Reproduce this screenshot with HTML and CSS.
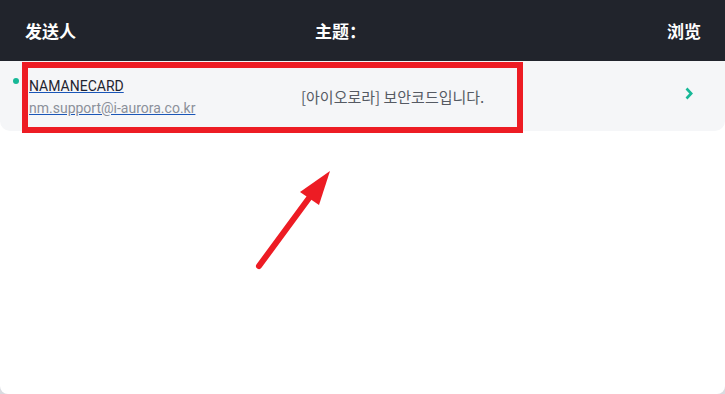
FILE: index.html
```html
<!DOCTYPE html>
<html lang="zh">
<head>
<meta charset="utf-8">
<link rel="stylesheet" href="styles.css">
</head>
<body>
<div class="card">
  <div class="head">
    <div class="h-sender">发送人</div>
    <div class="h-subject">主题：</div>
    <div class="h-view">浏览</div>
  </div>
  <div class="row">
    <span class="dot"></span>
    <div class="sender">
      <a class="name" href="#">NAMANECARD</a>
      <a class="mail" href="#">nm.support@i-aurora.co.kr</a>
    </div>
    <div class="subject">[아이오로라] 보안코드입니다.</div>
    <svg class="chev" width="8" height="13" viewBox="0 0 8 13"><path d="M1.5 1.5 L6.2 6.5 L1.5 11.5" fill="none" stroke="#17b897" stroke-width="2.6"/></svg>
  </div>
  <div class="mark"></div>
  <svg class="arrow" width="725" height="394" viewBox="0 0 725 394">
    <line x1="259" y1="266" x2="312" y2="194" stroke="#ed1c24" stroke-width="6" stroke-linecap="round"/>
    <polygon points="330,171 300,192 319,205" fill="#ed1c24"/>
  </svg>
</div>
</body>
</html>
```
FILE: styles.css
```css
html, body {
  margin: 0;
  padding: 0;
}
body {
  background: #d9dbe0;
  font-family: Roboto, "Noto Sans", "Noto Sans CJK KR", sans-serif;
}
.card {
  position: relative;
  width: 725px;
  height: 394px;
  background: #ffffff;
  border-radius: 0 0 8px 8px;
  overflow: hidden;
}
.head {
  height: 61px;
  background: #21242c;
  display: flex;
  align-items: center;
  padding: 0 24px 0 25px;
  color: #ffffff;
  font-family: "Noto Sans CJK SC", "Noto Sans CJK KR", sans-serif;
  font-weight: 700;
  font-size: 17px;
}
.h-sender {
  width: 290px;
}
.h-subject {
  flex: 1;
}
.h-view {
  text-align: right;
}
.row {
  height: 70px;
  background: #f5f6f8;
  border-radius: 0 0 10px 10px;
  display: flex;
  align-items: center;
  padding: 0 32px 0 13px;
}
.dot {
  width: 6px;
  height: 6px;
  border-radius: 50%;
  background: #17b897;
  align-self: flex-start;
  margin-top: 17px;
  margin-right: 10px;
}
.sender {
  width: 272px;
  display: flex;
  flex-direction: column;
  gap: 6px;
  margin-top: 2px;
}
.name {
  color: #1f2430;
  font-size: 14px;
  text-decoration: underline;
  text-decoration-color: #1a56b8;
}
.mail {
  color: #8b909a;
  font-size: 14px;
  text-decoration: underline;
  text-decoration-color: #1a56b8;
}
.subject {
  flex: 1;
  color: #555a63;
  font-size: 15px;
  font-family: "Noto Sans CJK KR", sans-serif;
  margin-top: 0;
}
.chev {
  display: block;
  margin-top: -6px;
}
.mark {
  position: absolute;
  left: 22px;
  top: 62px;
  width: 489px;
  height: 59px;
  border: 6px solid #ed1c24;
}
.arrow {
  position: absolute;
  left: 0;
  top: 0;
  pointer-events: none;
}
```
